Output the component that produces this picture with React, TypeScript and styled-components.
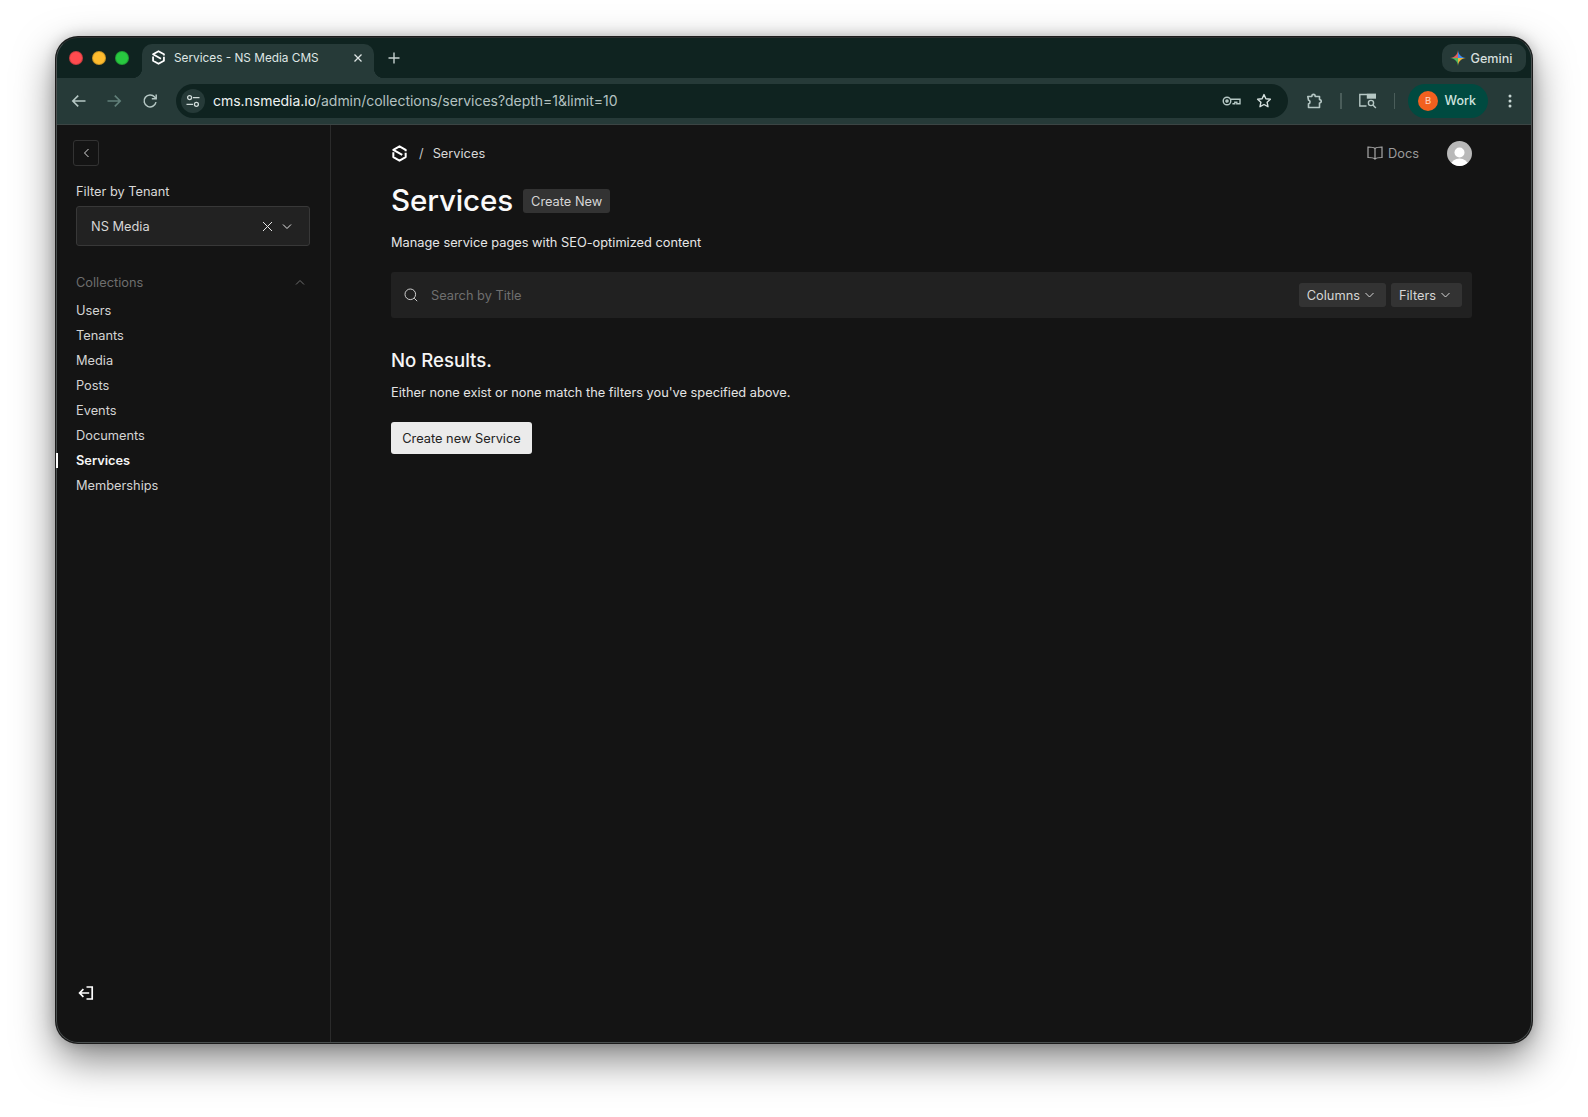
import React from "react";
import styled, { createGlobalStyle } from "styled-components";

const Global = createGlobalStyle`
  html, body { margin: 0; padding: 0; background: #fff; }
  body { font-family: Inter, "Liberation Sans", sans-serif; }
  * { box-sizing: border-box; }
`;
const Page = styled.div`
  width: 1588px; height: 1117px; padding: 37px 56px 0 56px; background: #fff; overflow: hidden;
`;
const Win = styled.div`
  height: 1006px; display: flex; flex-direction: column; border-radius: 22px; overflow: hidden; background: #141414;
  box-shadow: 0 0 0 1px #1c1c1c, 0 16px 40px rgba(0,0,0,.5), 0 0 14px rgba(0,0,0,.22);
  position: relative;
  &::after { content: ""; position: absolute; inset: 0; z-index: 1; border-radius: 22px; border: 1px solid #4a4f4f; border-top-color: #2b2f2f; pointer-events: none; }
`;
const Strip = styled.div`
  height: 41px; flex: none; background: #0f2320; display: flex; align-items: flex-end; padding-left: 13px;
`;
const Lights = styled.div`
  width: 73px; height: 41px; display: flex; align-items: center; gap: 9px;
`;
const Light = styled.span<{ $c: string }>`
  width: 14px; height: 14px; border-radius: 50%; background: ${p => p.$c}; border: .5px solid rgba(0,0,0,.2);
`;
const Tab = styled.div`
  width: 232px; height: 34px; background: #263a38; border-radius: 10px 10px 0 0; display: flex; align-items: center;
  padding: 0 11px 7px 9px; color: #dfe6e5; font-size: 11.8px; position: relative;
  &::before, &::after { content: ""; position: absolute; bottom: 0; width: 10px; height: 10px; }
  &::before { left: -10px; background: radial-gradient(circle at 0 0, transparent 10px, #263a38 10.5px); }
  &::after { right: -10px; background: radial-gradient(circle at 100% 0, transparent 10px, #263a38 10.5px); }
`;
const TabTitle = styled.span` flex: 1; margin-left: 8px; white-space: nowrap; `;
const NewTab = styled.span`
  margin-left: 14px; height: 41px; display: flex; align-items: center; color: #c6d2d0;
`;
const Spacer = styled.div` flex: 1; `;
const Gemini = styled.div`
  height: 28px; width: 84px; margin: 0 6px 6px 0; border-radius: 10px; background: #263a38; display: flex; align-items: center; gap: 5px;
  padding-left: 7.5px; color: #d5dfdd; font-size: 12.6px; font-weight: 500;
`;
const Toolbar = styled.div`
  height: 47px; flex: none; background: #263a38; display: flex; align-items: center; padding: 0 0 1px 15px; color: #b5c7c4;
  border-bottom: 1px solid #3b4544;
`;
const NavBtn = styled.span<{ $w: number; $dim?: boolean }>`
  width: ${p => p.$w}px; flex: none; display: flex; color: ${p => (p.$dim ? "#62807a" : "#b5c7c4")};
`;
const Omni = styled.div`
  width: 1112px; height: 34px; margin-left: -1px; border-radius: 17px; background: #0f2320; display: flex; align-items: center; padding: 0 16px 0 5px;
`;
const SiteChip = styled.span`
  width: 24px; height: 24px; border-radius: 50%; background: #263a38; display: flex; align-items: center; justify-content: center;
`;
const Url = styled.div`
  flex: 1; margin-left: 8px; font-size: 14px; letter-spacing: -.03px; color: #b4c2c0; white-space: nowrap;
  b { font-weight: 400; color: #eef3f2; }
`;
const OmniIcons = styled.div` display: flex; align-items: center; gap: 15px; `;
const ToolIcons = styled.div` display: flex; align-items: center; margin-left: 17px; `;
const Sep = styled.span` width: 1.5px; height: 16px; background: #4a5d5a; margin: 0 17px; `;
const Profile = styled.div`
  width: 80px; height: 34px; margin-left: -4px; border-radius: 17px; background: #004a40; display: flex; align-items: center; padding-left: 10px; gap: 6.5px;
  color: #cfe3df; font-size: 12.5px; font-weight: 500;
`;
const ProfileDot = styled.span`
  width: 20px; height: 20px; border-radius: 50%; background: #f2601f; color: #ffd8c5; font-size: 9.5px; display: flex; align-items: center; justify-content: center; font-weight: 400;
`;
const Kebab = styled.span` margin-left: 20px; display: flex; `;
const Body = styled.div` flex: 1; display: flex; min-height: 0; `;
const Side = styled.aside`
  width: 275px; flex: none; border-right: 1px solid #2b2b2b; padding: 15px 20px 0 20px; display: flex; flex-direction: column;
`;
const Collapse = styled.button`
  width: 26px; height: 26px; margin-left: -3px; padding: 0; background: none; border: 1px solid #333; border-radius: 3px; color: #d8d8d8;
  display: flex; align-items: center; justify-content: center;
`;
const FilterLabel = styled.label` margin-top: 16px; font-size: 12.8px; line-height: 20px; color: #d9d9d9; `;
const Select = styled.div`
  margin-top: 4px; height: 40px; flex: none; background: #222; border: 1px solid #383838; border-radius: 3px; display: flex; align-items: center;
  padding: 0 17px 0 14px; color: #d6d6d6; font-size: 12.8px;
`;
const SelectValue = styled.span` flex: 1; `;
const SelectIcons = styled.span` display: flex; align-items: center; gap: 9px; color: #e4e4e4; `;
const GroupHead = styled.div`
  margin-top: 26px; display: flex; align-items: center; justify-content: space-between; padding-right: 5px; height: 20px; flex: none; color: #6e6e6e; font-size: 12.8px;
`;
const NavList = styled.nav` margin-top: 6px; display: flex; flex-direction: column; `;
const NavItem = styled.a<{ $active?: boolean }>`
  height: 25px; display: flex; align-items: center; font-size: 12.8px; color: ${p => (p.$active ? "#f5f5f5" : "#d4d4d4")};
  font-weight: ${p => (p.$active ? 600 : 400)}; position: relative;
  ${p => p.$active ? `&::before { content: ""; position: absolute; z-index: 2; left: -20px; top: 5px; width: 2px; height: 15px; background: #fff; }` : ""}
`;
const Logout = styled.div` margin-top: auto; margin-bottom: 42px; margin-left: 2px; color: #fff; display: flex; `;
const Main = styled.main` flex: 1; padding: 14px 60px 0 60px; `;
const Crumbs = styled.div` height: 28px; display: flex; align-items: center; font-size: 12.8px; color: #d8d8d8; `;
const Slash = styled.span` margin: 0 9px 0 11px; color: #c4c4c4; `;
const Docs = styled.span` margin-left: auto; display: flex; align-items: center; gap: 5px; color: #9a9a9a; `;
const Avatar = styled.span` margin-left: 28px; width: 25px; height: 25px; border-radius: 50%; overflow: hidden; display: flex; `;
const TitleRow = styled.div` margin-top: 16px; display: flex; align-items: center; height: 34px; `;
const Title = styled.h1` margin: 0; font-size: 29.6px; font-weight: 500; color: #fafafa; letter-spacing: -.15px; line-height: 34px; `;
const Pill = styled.button`
  border: 0; height: 24px; padding: 0 8px; border-radius: 3px; background: #333; color: #d6d6d6; font: 400 12.8px Inter, sans-serif; display: inline-flex; align-items: center; gap: 5px;
`;
const CreatePill = styled(Pill)` margin-left: 10px; margin-top: 2px; `;
const ToolPill = styled(Pill)` padding-right: 12px; `;
const Desc = styled.p` margin: 16px 0 0; font-size: 12.8px; line-height: 20px; color: #e6e6e6; `;
const SearchBar = styled.div`
  margin-top: 19px; height: 46px; background: #212121; border-radius: 3px; display: flex; align-items: center; padding: 0 10px 0 13px; gap: 5px;
`;
const SearchText = styled.span` flex: 1; margin-left: 8px; font-size: 12.8px; color: #6f6f6f; `;
const Empty = styled.h3` margin: 30px 0 0; font-size: 18.6px; line-height: 24px; font-weight: 500; color: #f5f5f5; `;
const EmptyText = styled.p` margin: 11px 0 0; font-size: 12.8px; line-height: 20px; color: #e4e4e4; `;
const Primary = styled.button`
  margin-top: 19px; height: 32px; width: 141px; border: 0; border-radius: 3px; background: #ebebeb; color: #222; font: 400 12.8px Inter, sans-serif; padding: 0;
`;

const Chevron = ({ d = "M1 1.5 5 5.5 9 1.5", w = 10, h = 7 }: { d?: string; w?: number; h?: number }) => (
  <svg width={w} height={h} viewBox={`0 0 ${w} ${h}`} fill="none" stroke="currentColor" strokeWidth="1"><path d={d} /></svg>
);
const Logo = ({ s = 16 }: { s?: number }) => (
  <svg width={s} height={s} viewBox="0 0 16 16" fill="none" stroke="#fff" strokeWidth="1.9" strokeLinejoin="round">
    <path d="M13.8 5.8V4.6L8 1.3 2.2 4.6 10.6 9.4" />
    <path d="M2.2 6.9v4.5L8 14.7l5.8-3.3V7.2" />
  </svg>
);
const items = ["Users", "Tenants", "Media", "Posts", "Events", "Documents", "Services", "Memberships"];

export default function App() {
  return (
    <Page>
      <Global />
      <Win>
        <Strip>
          <Lights>
            <Light $c="#ff4b4f" /><Light $c="#febc2e" /><Light $c="#28c840" />
          </Lights>
          <Tab>
            <Logo s={15} />
            <TabTitle>Services - NS Media CMS</TabTitle>
            <svg width="10" height="10" viewBox="0 0 10 10" stroke="#dfe6e5" strokeWidth="1.3"><path d="M1.5 1.5l7 7M8.5 1.5l-7 7" /></svg>
          </Tab>
          <NewTab>
            <svg width="12" height="12" viewBox="0 0 12 12" stroke="currentColor" strokeWidth="1.4"><path d="M6 .5v11M.5 6h11" /></svg>
          </NewTab>
          <Spacer />
          <Gemini>
            <svg width="16" height="16" viewBox="0 0 16 16">
              <path d="M8 8V0C8.4 4.6 11.4 7.6 16 8Z" fill="#3f8cf0" />
              <path d="M8 8H0C4.6 8.4 7.6 11.4 8 16Z" fill="#4cb860" />
              <path d="M8 8H16C11.4 8.4 8.4 11.4 8 16Z" fill="#e8b23c" />
              <path d="M8 8V0C7.6 4.6 4.6 7.6 0 8Z" fill="#e0605c" />
            </svg>
            Gemini
          </Gemini>
        </Strip>
        <Toolbar>
          <NavBtn $w={35}>
            <svg width="16" height="16" viewBox="0 0 16 16" fill="none" stroke="currentColor" strokeWidth="1.6"><path d="M14.5 8H1.8M7.2 2.6 1.8 8l5.4 5.4" /></svg>
          </NavBtn>
          <NavBtn $w={36} $dim>
            <svg width="16" height="16" viewBox="0 0 16 16" fill="none" stroke="currentColor" strokeWidth="1.6"><path d="M1.5 8h12.7M8.8 2.6 14.2 8l-5.4 5.4" /></svg>
          </NavBtn>
          <NavBtn $w={35}>
            <svg width="16" height="16" viewBox="0 0 16 16" fill="none" stroke="currentColor" strokeWidth="1.5"><path d="M14 9.2a6 6 0 1 1-1.3-5.2L14 5.4" /><path d="M14.2 1.4v4.4H9.8" /></svg>
          </NavBtn>
          <Omni>
            <SiteChip>
              <svg width="16" height="16" viewBox="0 0 16 16" fill="none" stroke="#cfdad8" strokeWidth="1.3"><circle cx="4.6" cy="4.6" r="2" /><path d="M8 4.6h6.5M1.5 11.3H8" /><circle cx="11.4" cy="11.3" r="2" /></svg>
            </SiteChip>
            <Url><b>cms.nsmedia.io</b>/admin/collections/services?depth=1&amp;limit=10</Url>
            <OmniIcons>
              <svg width="19" height="12" viewBox="0 0 19 12" fill="none" stroke="#b5c7c4" strokeWidth="1.4"><circle cx="5" cy="6" r="3.8" /><circle cx="5" cy="6" r="1.1" fill="#b5c7c4" /><path d="M8.8 4.2h9.2v4.6h-3.2V7.2h-2v1.6h-2.4" /></svg>
              <svg width="16" height="16" viewBox="0 0 16 16" fill="none" stroke="#d5e0de" strokeWidth="1.4" strokeLinejoin="round"><path d="M8 1.6l1.9 4.1 4.5.5-3.3 3 .9 4.5L8 11.5l-4 2.2.9-4.5-3.3-3 4.5-.5Z" /></svg>
            </OmniIcons>
          </Omni>
          <ToolIcons>
            <svg width="18" height="18" viewBox="0 0 18 18" fill="none" stroke="#b5c7c4" strokeWidth="1.6" strokeLinejoin="round"><path d="M2.8 4.5H6.8C6.8 1.6 10.2 1.6 10.2 4.5H14.5V7.6C16.8 7.6 16.8 11 14.5 11V15.5H3.5V11.8C5.5 11.8 5.5 8.2 3.5 8.2Z" /></svg>
            <Sep />
            <svg width="18" height="16" viewBox="0 0 18 16" fill="none" stroke="#b5c7c4" strokeWidth="1.4"><path d="M7.5 13H.8V1.5h15.5V5" /><rect x="8.5" y="1.5" width="7.8" height="3.5" fill="#b5c7c4" /><circle cx="12" cy="10" r="2.6" /><path d="M13.9 12l3 3" /></svg>
            <Sep />
            <Profile><ProfileDot>B</ProfileDot>Work</Profile>
            <Kebab>
              <svg width="4" height="14" viewBox="0 0 4 14" fill="#c6d6d3"><circle cx="2" cy="2" r="1.5" /><circle cx="2" cy="7" r="1.5" /><circle cx="2" cy="12" r="1.5" /></svg>
            </Kebab>
          </ToolIcons>
        </Toolbar>
        <Body>
          <Side>
            <Collapse aria-label="collapse">
              <Chevron d="M5.5 1 1.5 5 5.5 9" w={7} h={10} />
            </Collapse>
            <FilterLabel>Filter by Tenant</FilterLabel>
            <Select>
              <SelectValue>NS Media</SelectValue>
              <SelectIcons>
                <svg width="11" height="11" viewBox="0 0 11 11" stroke="currentColor" strokeWidth="1"><path d="M1 1l9 9M10 1l-9 9" /></svg>
                <Chevron />
              </SelectIcons>
            </Select>
            <GroupHead>
              Collections
              <Chevron d="M1 5.5 5 1.5 9 5.5" />
            </GroupHead>
            <NavList>
              {items.map(i => <NavItem key={i} $active={i === "Services"}>{i}</NavItem>)}
            </NavList>
            <Logout>
              <svg width="16" height="16" viewBox="0 0 16 16" fill="none" stroke="currentColor" strokeWidth="1.7"><path d="M8.5 2h5.7v12H8.5" /><path d="M11.2 8H1.6M5.4 4.2 1.6 8l3.8 3.8" /></svg>
            </Logout>
          </Side>
          <Main>
            <Crumbs>
              <Logo s={17} />
              <Slash>/</Slash>
              Services
              <Docs>
                <svg width="16" height="14" viewBox="0 0 16 14" fill="none" stroke="#a8a8a8" strokeWidth="1.2"><path d="M8 2.5C7 1.4 5 1 1 1v10.5c4 0 6 .4 7 1.5 1-1.1 3-1.5 7-1.5V1C11 1 9 1.4 8 2.5Zm0 0V13" /></svg>
                Docs
              </Docs>
              <Avatar>
                <svg width="25" height="25" viewBox="0 0 25 25"><rect width="25" height="25" fill="#b9b9b9" /><circle cx="12.5" cy="11.5" r="5" fill="#fff" /><ellipse cx="12.5" cy="24" rx="8.5" ry="6.5" fill="#fff" /></svg>
              </Avatar>
            </Crumbs>
            <TitleRow>
              <Title>Services</Title>
              <CreatePill>Create New</CreatePill>
            </TitleRow>
            <Desc>Manage service pages with SEO-optimized content</Desc>
            <SearchBar>
              <svg width="14" height="14" viewBox="0 0 14 14" fill="none" stroke="#cfcfcf" strokeWidth="1"><circle cx="6.3" cy="6.3" r="5.3" /><path d="M10.2 10.2l3 3" /></svg>
              <SearchText>Search by Title</SearchText>
              <ToolPill>Columns <Chevron d="M.5 1 4.5 5 8.5 1" w={9} h={6} /></ToolPill>
              <ToolPill>Filters <Chevron d="M.5 1 4.5 5 8.5 1" w={9} h={6} /></ToolPill>
            </SearchBar>
            <Empty>No Results.</Empty>
            <EmptyText>Either none exist or none match the filters you've specified above.</EmptyText>
            <Primary>Create new Service</Primary>
          </Main>
        </Body>
      </Win>
    </Page>
  );
}
